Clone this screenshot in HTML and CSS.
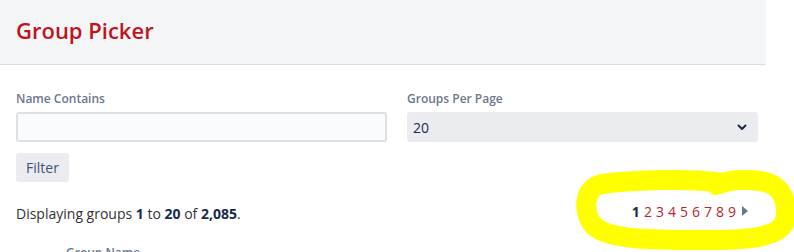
FILE: index.html
```html
<!DOCTYPE html>
<html lang="en">

<head>
    <meta charset="UTF-8">
    <title>Group Picker</title>
    <link rel="stylesheet" href="styles.css">
</head>

<body>
    <header class="page-header">
        <h2>Group Picker</h2>
    </header>

    <div class="content">
        <form class="filter-form">
            <div class="field">
                <label for="name-contains">Name Contains</label>
                <input type="text" id="name-contains" class="text-input">
            </div>
            <div class="field">
                <label for="per-page">Groups Per Page</label>
                <div class="select-box">
                    <span>20</span>
                    <svg class="chevron" width="10" height="7" viewBox="0 0 10 7">
                        <path d="M1.5 1.5 L5 5 L8.5 1.5" fill="none" stroke="#172b4d" stroke-width="2" stroke-linecap="round" stroke-linejoin="round"/>
                    </svg>
                </div>
            </div>
            <button type="button" class="filter-btn">Filter</button>
        </form>

        <div class="results-bar">
            <p class="results-count">Displaying groups <b>1</b> to <b>20</b> of <b>2,085</b>.</p>
            <div class="pagination">
                <strong>1</strong>
                <a href="#">2</a>
                <a href="#">3</a>
                <a href="#">4</a>
                <a href="#">5</a>
                <a href="#">6</a>
                <a href="#">7</a>
                <a href="#">8</a>
                <a href="#">9</a>
                <span class="next-arrow"></span>
            </div>
        </div>

        <table class="groups-table">
            <thead>
                <tr>
                    <th class="check-col"></th>
                    <th>Group Name</th>
                </tr>
            </thead>
        </table>
    </div>

    <!-- hand drawn highlight around the pager -->
    <svg class="scribble" width="794" height="252" viewBox="0 0 794 252">
        <path d="M716 182 C690 179 640 179 602 184 C582 188 583 214 594 226 C610 241 660 240 712 240 C752 240 782 236 785 220 C788 204 784 184 760 181 C745 179 728 180 716 185"
              fill="none" stroke="#ffff00" stroke-width="20" stroke-linecap="round" stroke-linejoin="round"/>
    </svg>
</body>

</html>
```

FILE: styles.css
```css
body {
    font-family: "Open Sans", Arial, sans-serif;
    font-size: 14px;
    margin: 0;
    padding: 0;
    background-color: #fff;
    color: #333;
}

.page-header {
    width: 750px;
    background-color: #f4f5f7;
    border-bottom: 1px solid #dcdde0;
    padding: 17px 0 21px 16px;
}

.page-header h2 {
    margin: 0;
    font-size: 22px;
    line-height: 26px;
    font-weight: 600;
    color: #c0141c;
}

.content {
    padding: 0 16px;
}

.filter-form {
    display: grid;
    grid-template-columns: 371px 351px;
    column-gap: 20px;
    margin-top: 26px;
}

.field label {
    display: block;
    font-size: 12px;
    line-height: 16px;
    font-weight: 600;
    color: #6b778c;
    margin-bottom: 5px;
}

.text-input {
    display: block;
    box-sizing: border-box;
    width: 100%;
    height: 30px;
    margin: 0;
    border: 2px solid #dfe1e6;
    border-radius: 3px;
    background-color: #fafbfc;
}

.select-box {
    box-sizing: border-box;
    height: 30px;
    border-radius: 3px;
    background-color: #ebecf0;
    display: flex;
    align-items: center;
    justify-content: space-between;
    padding: 0 11px 0 6px;
    color: #172b4d;
}

.filter-btn {
    grid-column: 1;
    justify-self: start;
    margin-top: 11px;
    height: 29px;
    padding: 0 10px;
    border: none;
    border-radius: 3px;
    background-color: #ebecf0;
    color: #42526e;
    font-family: inherit;
    font-size: 14px;
}

.results-bar {
    display: flex;
    justify-content: space-between;
    align-items: center;
    width: 732px;
    margin-top: 22px;
}

.results-count {
    margin: 0;
    line-height: 20px;
}

.results-count b {
    color: #172b4d;
}

.pagination {
    display: flex;
    align-items: center;
    gap: 4px;
    margin-top: -6px;
}

.pagination strong {
    color: #172b4d;
}

.pagination a {
    color: #b5262d;
    text-decoration: none;
}

.next-arrow {
    width: 0;
    height: 0;
    border-top: 5px solid transparent;
    border-bottom: 5px solid transparent;
    border-left: 6px solid #6b778c;
    margin-left: 2px;
}

.groups-table {
    border-collapse: collapse;
    margin-top: 16px;
}

.groups-table th {
    font-size: 12px;
    font-weight: 600;
    color: #6b778c;
    text-align: left;
    padding: 4px 0;
}

.groups-table .check-col {
    width: 50px;
}

.scribble {
    position: absolute;
    left: 0;
    top: 0;
    pointer-events: none;
}
```
